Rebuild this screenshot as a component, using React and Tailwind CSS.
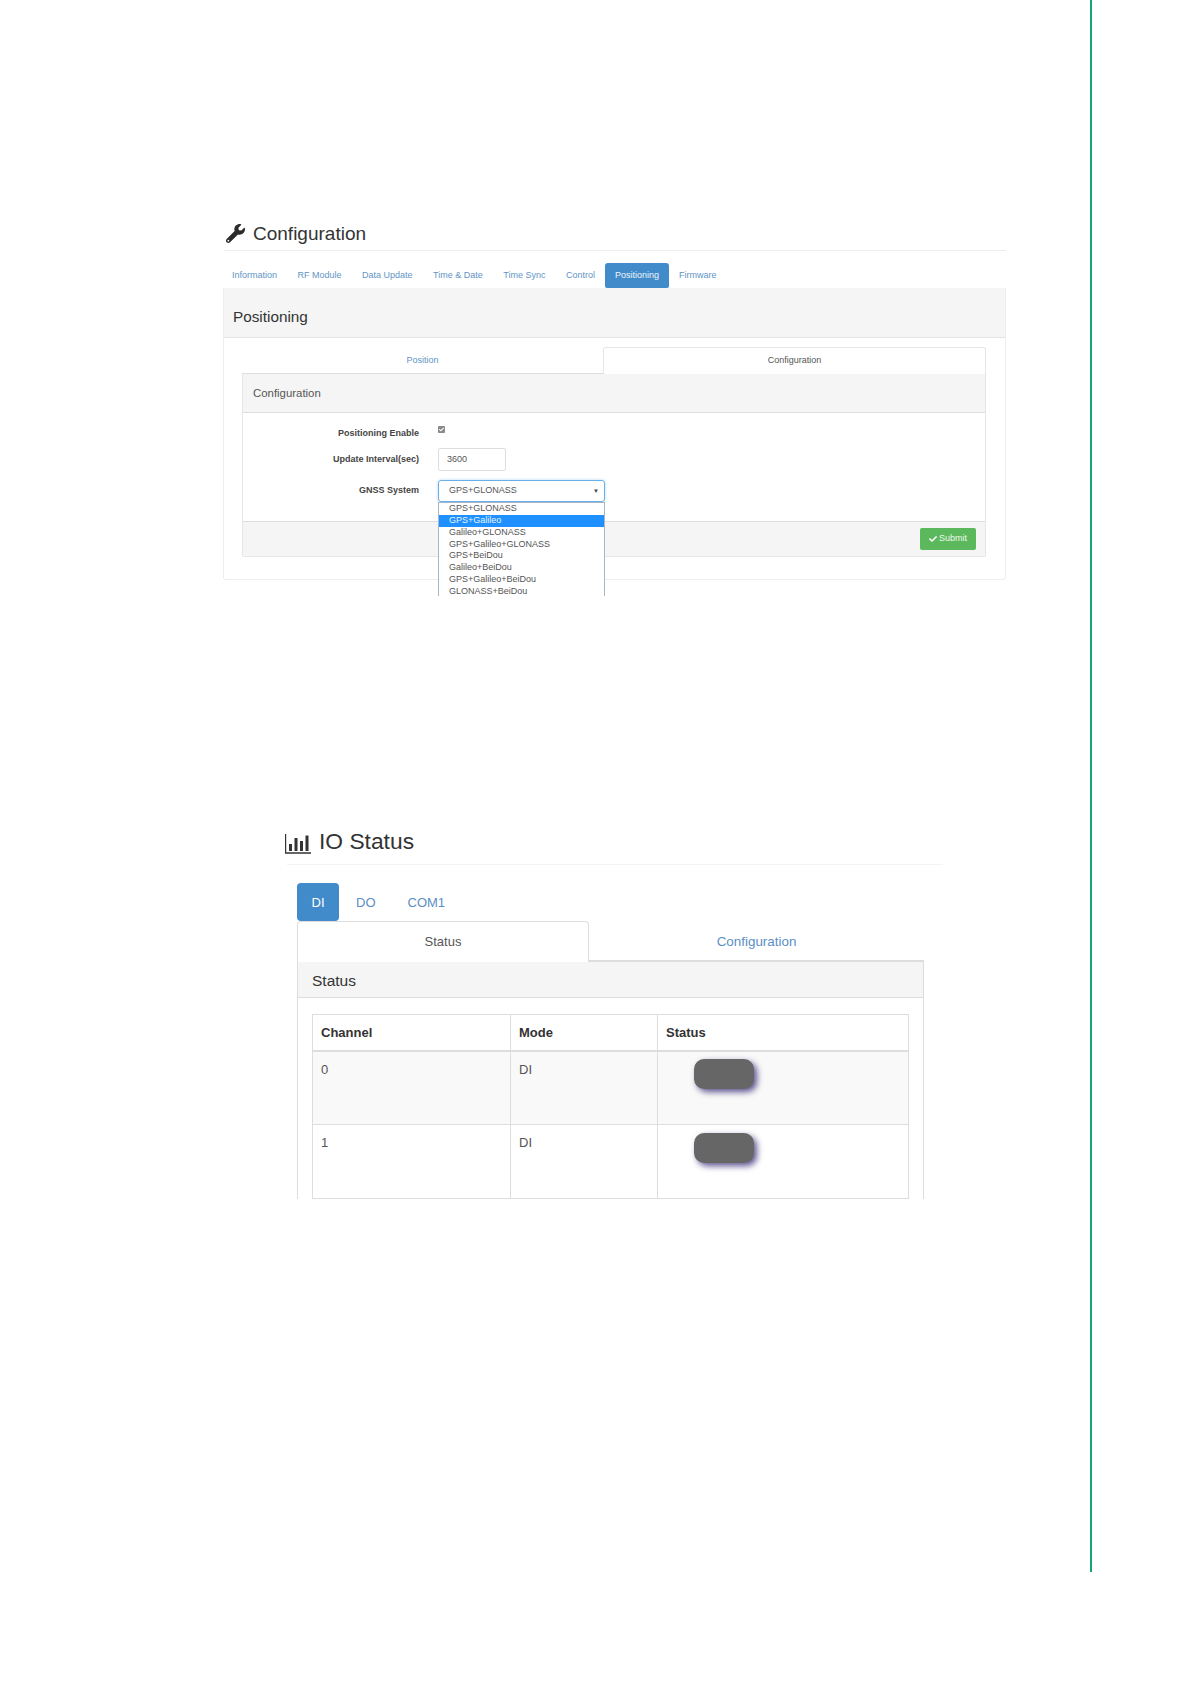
import React from 'react';
import { FaWrench, FaCheck } from 'react-icons/fa';

const mainTabs = ['Information', 'RF Module', 'Data Update', 'Time & Date', 'Time Sync', 'Control', 'Positioning', 'Firmware'];
const gnssOptions = [
  'GPS+GLONASS',
  'GPS+Galileo',
  'Galileo+GLONASS',
  'GPS+Galileo+GLONASS',
  'GPS+BeiDou',
  'Galileo+BeiDou',
  'GPS+Galileo+BeiDou',
  'GLONASS+BeiDou',
];
const channels = [
  { id: '0', mode: 'DI', striped: true },
  { id: '1', mode: 'DI', striped: false },
];

const BarChartIcon = () => (
  <svg width="26" height="20" viewBox="0 0 26 20" className="text-[#333]">
    <path d="M0.5 0v19h25.5" fill="none" stroke="currentColor" strokeWidth="1.4" />
    <rect x="4" y="10" width="3" height="7" fill="currentColor" />
    <rect x="9.5" y="4" width="3" height="13" fill="currentColor" />
    <rect x="15" y="7" width="3" height="10" fill="currentColor" />
    <rect x="20.5" y="1.5" width="3" height="15.5" fill="currentColor" />
  </svg>
);

const FormLabel = ({ children, className }) => (
  <div className={`w-[176px] text-right text-[9px] font-bold text-[#444] ${className}`}>{children}</div>
);

const ConfigurationSection = () => (
  <section className="ml-[223px] w-[783px] pt-[218px]">
    <div className="ml-px flex h-[33px] items-center border-b border-[#eee] pb-[1px]">
      <FaWrench className="ml-[2px] h-[19px] w-[19px] text-[#2b2b2b]" />
      <h1 className="ml-[8px] text-[19px] leading-none font-normal text-[#333]">Configuration</h1>
    </div>

    <div className="-ml-px mt-[12px] flex h-[25px] gap-[0.5px]">
      {mainTabs.map((tab) => (
        <div
          key={tab}
          className={
            tab === 'Positioning'
              ? 'flex items-center rounded-t-[3px] rounded-b-[2px] bg-[#428bca] px-[9.5px] text-[9px] text-[#eef5fb]'
              : 'flex items-center px-[10px] text-[9px] text-[#5f95c6]'
          }
        >
          {tab}
        </div>
      ))}
    </div>

    <div className="rounded-b-[3px] border border-t-0 border-[#eee] pb-[22px]">
      <div className="flex h-[50px] items-center border-b border-[#e3e3e3] bg-[#f5f5f5] px-[9px] pt-[10px] text-[15.3px] text-[#333]">
        Positioning
      </div>

      <div className="ml-[18px] mr-[19px] mt-[9px]">
        <div className="flex h-[27px]">
          <div className="flex w-[361px] items-center justify-center border-b border-[#ddd] pt-[1px] text-[9px] text-[#5f95c6]">
            Position
          </div>
          <div className="flex flex-1 items-center justify-center rounded-t-[3px] border border-b-0 border-[#e6e6e6] text-[9px] text-[#555]">
            Configuration
          </div>
        </div>

        <div className="rounded-b-[2px] border-x border-b border-[#e6e6e6]">
          <div className="flex h-[39px] items-center border-b border-[#ddd] bg-[#f5f5f5] px-[10px] pt-[1px] text-[11.4px] text-[#555]">
            Configuration
          </div>

          <div className="h-[108px] pt-[13px]">
            <div className="flex h-[22px] gap-[19px]">
              <FormLabel className="pt-[1px]">Positioning Enable</FormLabel>
              <div className="relative h-[7px] w-[7px] rounded-[1px] bg-[#8a8a8a]">
                <FaCheck className="absolute top-[1px] left-[1px] h-[5px] w-[5px] text-white" />
              </div>
            </div>

            <div className="flex h-[23px] gap-[19px]">
              <FormLabel className="self-center">Update Interval(sec)</FormLabel>
              <div className="flex w-[68px] items-center rounded-[2px] border border-[#ddd] pl-[8px] text-[9px] text-[#555]">
                3600
              </div>
            </div>

            <div className="mt-[9px] flex h-[22px] gap-[19px]">
              <FormLabel className="self-center">GNSS System</FormLabel>
              <div className="relative w-[167px]">
                <div className="flex h-[22px] items-center justify-between rounded-[3px] border border-[#66afe9] pr-[5px] pl-[10px] text-[9px] text-[#555] shadow-[0_0_3px_rgba(102,175,233,0.5)]">
                  <span>GPS+GLONASS</span>
                  <span className="text-[6px] text-[#444]">▼</span>
                </div>
                <div className="absolute top-full left-0 z-10 h-[94px] w-full overflow-hidden border-x border-t border-[#a9b6c9] bg-white">
                  {gnssOptions.map((option) => (
                    <div
                      key={option}
                      className={`h-[11.85px] pl-[10px] text-[9px] leading-[11px] ${
                        option === 'GPS+Galileo' ? 'bg-[#1e90ff] text-[#e8f3ff]' : 'text-[#555]'
                      }`}
                    >
                      {option}
                    </div>
                  ))}
                </div>
              </div>
            </div>
          </div>

          <div className="flex h-[35px] items-center justify-end border-t border-[#ddd] bg-[#f5f5f5] pr-[9px]">
            <div className="flex h-[22px] w-[56px] items-center justify-center gap-[2px] rounded-[2px] bg-[#5cb85c] text-[9px] text-[#eef8ee]">
              <FaCheck className="h-[8px] w-[8px] text-white" />
              Submit
            </div>
          </div>
        </div>
      </div>
    </div>
  </section>
);

const IoStatusSection = () => (
  <section className="ml-[287px] mt-[248px] w-[656px]">
    <div className="flex h-[37px] items-start border-b border-[#f3f3f3]">
      <div className="-ml-[2px] mt-[6px]">
        <BarChartIcon />
      </div>
      <h1 className="ml-[8px] -mt-px text-[22.8px] leading-[28px] font-normal text-[#333]">IO Status</h1>
    </div>

    <div className="ml-[10px] mt-[18px] flex h-[38px] gap-[2px] text-[13px]">
      <div className="flex w-[42px] items-center justify-center rounded-[4px] bg-[#428bca] pt-px text-white">DI</div>
      <div className="flex items-center px-[15px] pt-px text-[#5b8fc5]">DO</div>
      <div className="flex items-center px-[15px] pt-px text-[#5b8fc5]">COM1</div>
    </div>

    <div className="ml-[10px] w-[627px]">
      <div className="flex h-[41px] text-[13px]">
        <div className="flex w-[292px] items-center justify-center rounded-t-[4px] border border-b-0 border-[#ddd] text-[#555]">
          Status
        </div>
        <div className="flex flex-1 items-center justify-center border-b-2 border-[#ddd] pt-[3px] text-[13.4px] text-[#5b8fc5]">
          Configuration
        </div>
      </div>

      <div className="h-[237px] overflow-hidden border-x border-[#ddd]">
        <div className="flex h-[36px] items-center border-b border-[#ddd] bg-[#f5f5f5] px-[14px] pt-[2px] text-[15.5px] text-[#333]">
          Status
        </div>
        <div className="px-[14px] pt-[16px]">
          <table className="w-[597px] table-fixed border-collapse text-[13px]">
            <thead>
              <tr className="h-[36px] border-b-2 border-[#ddd] text-left font-bold text-[#333]">
                <th className="w-[198px] border border-b-2 border-[#ddd] px-[8px]">Channel</th>
                <th className="w-[147px] border border-b-2 border-[#ddd] px-[8px]">Mode</th>
                <th className="border border-b-2 border-[#ddd] px-[8px]">Status</th>
              </tr>
            </thead>
            <tbody>
              {channels.map((channel) => (
                <tr key={channel.id} className={`h-[74px] text-[#555] ${channel.striped ? 'bg-[#f9f9f9]' : 'bg-white'}`}>
                  <td className="border border-[#ddd] px-[8px] pt-[8px] align-top">{channel.id}</td>
                  <td className="border border-[#ddd] px-[8px] pt-[8px] align-top">{channel.mode}</td>
                  <td className="border border-[#ddd] pt-[7.5px] pl-[36px] align-top">
                    <div className="h-[30px] w-[60px] rounded-[10px] bg-[#666] shadow-[3px_3px_6px_rgba(40,30,110,0.75)]" />
                  </td>
                </tr>
              ))}
            </tbody>
          </table>
        </div>
      </div>
    </div>
  </section>
);

export default function App() {
  return (
    <div className="h-[1684px] w-[1191px] overflow-hidden bg-white font-['Liberation_Sans',Arial,sans-serif]">
      <div className="h-[1572px] w-[1092px] border-r-2 border-[#12a86f]">
        <ConfigurationSection />
        <IoStatusSection />
      </div>
    </div>
  );
}
